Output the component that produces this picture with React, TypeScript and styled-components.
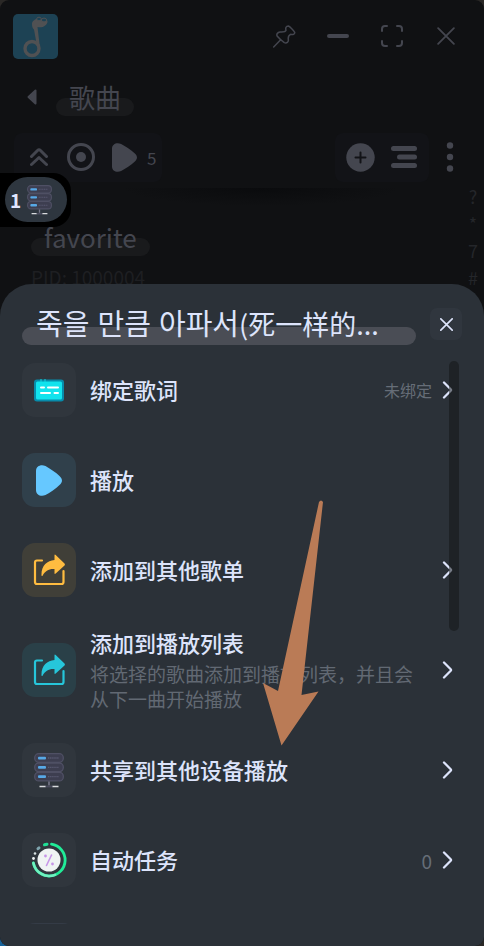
import React from "react";
import styled, { createGlobalStyle } from "styled-components";

const GlobalStyle = createGlobalStyle`
  * { box-sizing: border-box; }
  html, body, #root { height: 100%; }
  body {
    margin: 0;
    overflow: hidden;
    background: linear-gradient(45deg, #17639b 0 16px, #2a2826 40px);
    font-family: "Noto Sans CJK SC", "Noto Sans CJK KR", sans-serif;
  }
  button {
    border: 0;
    padding: 0;
    background: none;
    color: inherit;
    font: inherit;
    cursor: pointer;
  }
  h1, h2, p { margin: 0; font-weight: 400; }
  svg { display: block; flex: none; }
`;

const Window = styled.div`
  position: relative;
  height: 100%;
  overflow: hidden;
  border-radius: 9px;
  background: #101113;
  color: #44464f;
`;

const TitleBar = styled.header`
  display: flex;
  align-items: center;
  justify-content: space-between;
  height: 72px;
  padding: 0 11px 0 13px;
`;

const WindowControls = styled.div`
  display: flex;
`;

const ControlButton = styled.button`
  display: grid;
  place-items: center;
  width: 54px;
  height: 54px;
`;

const PageHeading = styled.div`
  display: flex;
  align-items: center;
  height: 50px;
  padding-left: 26px;
  gap: 18px;
`;

const BackButton = styled.button`
  width: 12px;
  height: 20px;
  display: grid;
  place-items: center;
`;

const Highlight = styled.div<{ $bar: string }>`
  position: relative;
  isolation: isolate;
  min-width: 0;
  padding: 0 13px;
  line-height: 38px;
  &::before {
    content: "";
    position: absolute;
    z-index: -1;
    left: 0;
    right: 0;
    bottom: 0;
    height: 18px;
    border-radius: 9px;
    background: ${(p) => p.$bar};
  }
`;

const PageTitle = styled.h1`
  font-size: 26px;
  line-height: 38px;
`;

const Toolbar = styled.div`
  display: flex;
  align-items: center;
  height: 66px;
  padding: 4px 24px 0 14px;
`;

const ToolGroup = styled.div`
  display: flex;
  align-items: center;
  gap: 12px;
  height: 49px;
  padding: 0 6px 0 10px;
  border-radius: 8px;
  background: #121317;
`;

const RightTools = styled(ToolGroup)`
  margin-left: auto;
  margin-right: 11px;
  padding: 0 10px;
  gap: 14px;
`;

const ToolButton = styled.button`
  display: flex;
  align-items: center;
  justify-content: center;
  min-width: 30px;
  height: 40px;
`;

const PlayAllButton = styled(ToolButton)`
  gap: 10px;
  padding-left: 4px;
  font-size: 17px;
`;

const MoreButton = styled(ToolButton)`
  min-width: 20px;
`;

const Content = styled.main`
  display: flex;
  justify-content: space-between;
  padding: 0 5px 0 14px;
  background: radial-gradient(ellipse 140px 18px at 54% 0, #0a0b0d, transparent);
`;

const PlaylistCard = styled.section`
  padding: 30px 17px;
`;

const PlaylistName = styled.h2`
  font-size: 26px;
  line-height: 38px;
`;

const PlaylistId = styled.p`
  font-size: 19px;
  line-height: 24px;
  margin-top: 9px;
  color: #1e1f22;
`;

const IndexBar = styled.nav`
  display: flex;
  flex-direction: column;
  width: 12px;
  margin-top: -5px;
  font-size: 18px;
  line-height: 27px;
  text-align: center;
  color: #24262a;
`;

const IndexLink = styled.a`
  color: inherit;
  text-decoration: none;
`;

const DeviceBadge = styled.div`
  position: absolute;
  top: 173px;
  left: 0;
  padding: 4px 4px 5px 5px;
  border-radius: 0 18px 18px 0;
  background: #000;
`;

const BadgePill = styled.div`
  display: flex;
  align-items: center;
  gap: 6px;
  height: 45px;
  padding: 0 15px 0 5px;
  border-radius: 23px;
  background: #2e363f;
  color: #e2e7ff;
  font-size: 19px;
  font-weight: 700;
`;

const Overlay = styled.div`
  position: absolute;
  inset: 0;
  display: flex;
  flex-direction: column;
  padding-top: 284px;
  pointer-events: none;
`;

const Sheet = styled.section`
  position: relative;
  flex: 1;
  min-height: 0;
  display: flex;
  flex-direction: column;
  padding: 0 22px 22px;
  border-radius: 32px 32px 0 0;
  background: #2b3138;
  color: #dde4fb;
  pointer-events: auto;
`;

const SheetHeader = styled.div`
  display: flex;
  align-items: center;
  gap: 14px;
  height: 61px;
  padding-top: 20px;
`;

const SheetTitleBar = styled(Highlight)`
  flex: 1;
  height: 40px;
  padding: 0 14px;
`;

const SheetTitle = styled.h2`
  font-size: 27px;
  line-height: 38px;
`;

const Hangul = styled.span`
  font-size: 29px;
  line-height: 1;
`;

const CloseButton = styled.button`
  display: grid;
  place-items: center;
  width: 32px;
  height: 32px;
  margin-bottom: 1px;
  border-radius: 7px;
  background: #30363e;
`;

const List = styled.div`
  flex: 1;
  min-height: 0;
  overflow: hidden;
`;

const Row = styled.button<{ $tall?: boolean }>`
  display: flex;
  align-items: center;
  width: 100%;
  height: ${(p) => (p.$tall ? 110 : 90)}px;
  padding-right: 9px;
  text-align: left;
`;

const Tile = styled.span<{ $tint?: string }>`
  display: grid;
  place-items: center;
  flex: none;
  width: 54px;
  height: 54px;
  margin-right: 14px;
  border-radius: 13px;
  background: ${(p) => p.$tint ?? "#30363d"};
  color: #66c8ff;
`;

const RowText = styled.span`
  display: flex;
  flex-direction: column;
  gap: 5px;
  flex: 1;
  min-width: 0;
  padding-bottom: 2px;
`;

const RowLabel = styled.span`
  font-size: 22px;
  line-height: 28px;
  font-weight: 500;
`;

const RowHint = styled.span`
  font-size: 19px;
  line-height: 25px;
  color: #626973;
`;

const Trailing = styled.span<{ $size?: number }>`
  display: flex;
  align-items: center;
  gap: 10px;
  margin-left: 20px;
  font-size: ${(p) => p.$size ?? 16}px;
  color: #666d77;
`;

const ScrollThumb = styled.div`
  position: absolute;
  top: 77px;
  right: 25px;
  width: 10px;
  height: 270px;
  border-radius: 5px;
  background: rgba(18, 20, 20, 0.5);
`;

const Pointer = styled.svg`
  position: absolute;
  top: 500px;
  left: 263px;
  pointer-events: none;
`;

const Logo = () => (
  <svg width="45" height="45" viewBox="0 0 45 45" aria-hidden="true">
    <rect width="45" height="45" rx="5" fill="#1d4254" />
    <circle cx="19" cy="34.500" r="7" fill="none" stroke="#505153" strokeWidth="3.400" />
    <path d="M19 10c0-4 5-6 8-5 4-1 8 0 7.500 3-1 4-5 6-10 5l2.500 21-3-2-3-16.500c-1.500-1-2-3-2-5.500z" fill="#505153" />
    <ellipse cx="26" cy="5" rx="2.300" ry="1.800" fill="#1d4254" stroke="#505153" />
    <ellipse cx="31" cy="6" rx="2.600" ry="1.900" fill="#1d4254" stroke="#505153" />
  </svg>
);

const PinIcon = () => (
  <svg width="23" height="23" viewBox="-1 -1 69 69" fill="none" stroke="currentColor" strokeWidth="4.500" strokeLinecap="round" strokeLinejoin="round">
    <path d="M1 65L22 43M12 33C8 27 13 21 20 20C29 20 36 21 38 15C36 8 38 2 45 2C49 3 62 16 64 21C65 27 58 29 52 27C45 30 44 36 45 43C46 50 40 55 33 52C26 47 17 39 12 33Z" />
  </svg>
);

const CrossIcon = ({ size, weight }: { size: number; weight: number }) => (
  <svg width={size} height={size} viewBox="0 0 16 16" fill="none" stroke="currentColor" strokeWidth={weight} strokeLinecap="round">
    <path d="M1 1L15 15M15 1L1 15" />
  </svg>
);

const MinimizeIcon = () => (
  <svg width="22" height="4" viewBox="0 0 22 4">
    <rect width="22" height="4" rx="2" fill="currentColor" />
  </svg>
);

const MaximizeIcon = () => (
  <svg width="24" height="24" viewBox="0 0 24 24" fill="none" stroke="currentColor" strokeWidth="2" strokeLinecap="round">
    <path d="M2 7V5a3 3 0 0 1 3-3h2M17 2h2a3 3 0 0 1 3 3v2M22 17v2a3 3 0 0 1-3 3h-2M7 22H5a3 3 0 0 1-3-3v-2" />
  </svg>
);

const BackIcon = () => (
  <svg width="10" height="16" viewBox="0 0 10 16" fill="currentColor" stroke="currentColor" strokeWidth="2" strokeLinejoin="round">
    <path d="M1.500 8L8.500 1.500V14.500Z" />
  </svg>
);

const CollapseIcon = () => (
  <svg width="20" height="20" viewBox="0 0 20 20" fill="none" stroke="currentColor" strokeWidth="3" strokeLinecap="round" strokeLinejoin="round">
    <path d="M2.500 9.500L8.500 3.500Q10 2 11.500 3.500L17.500 9.500M2.500 17.500L10 10.500L17.500 17.500" />
  </svg>
);

const TargetIcon = () => (
  <svg width="28" height="28" viewBox="0 0 28 28">
    <circle cx="14" cy="14" r="12.500" fill="none" stroke="currentColor" strokeWidth="3" />
    <circle cx="14" cy="14" r="5" fill="currentColor" />
  </svg>
);

const PlayIcon = ({ width, height }: { width: number; height: number }) => (
  <svg width={width} height={height} viewBox="0 0 26 31" preserveAspectRatio="none" fill="currentColor">
    <path d="M0 6C0 1 5-1 9.500 1C14 3.500 20 7.500 23.500 11C26.800 14 26.800 17 23.500 20C20 23.500 14 27.500 9.500 30C5 32 0 30 0 25Z" />
  </svg>
);

const AddIcon = () => (
  <svg width="29" height="29" viewBox="0 0 29 29">
    <circle cx="14.500" cy="14.500" r="14.200" fill="currentColor" />
    <path d="M14.500 9.500v10M9.500 14.500h10" stroke="#121317" strokeWidth="2" strokeLinecap="round" />
  </svg>
);

const LinesIcon = () => (
  <svg width="26" height="24" viewBox="0 0 26 24" fill="currentColor">
    <rect y="1" width="26" height="5" rx="2.500" />
    <rect x="6" y="9.500" width="20" height="5" rx="2.500" />
    <rect y="18" width="26" height="5" rx="2.500" />
  </svg>
);

const MoreIcon = () => (
  <svg width="8" height="30" viewBox="0 0 8 30" fill="currentColor">
    <circle cx="4" cy="3.500" r="3.200" />
    <circle cx="4" cy="15" r="3.200" />
    <circle cx="4" cy="26.500" r="3.200" />
  </svg>
);

const ServerIcon = ({ width, height }: { width: number; height: number }) => (
  <svg width={width} height={height} viewBox="0 0 30 35" preserveAspectRatio="none" aria-hidden="true">
    {[0.7, 10, 19.3].map((y) => (
      <g key={y}>
        <rect x="0.700" y={y} width="28.600" height="8.600" rx="4" fill="#3d3e50" stroke="#4f5064" strokeWidth="1.300" />
        <rect x="4" y={y + 3} width="8" height="2.700" rx="1" fill="#57a8e6" />
        <path d={`M14 ${y + 4.3}h11`} stroke="#585970" strokeWidth="1.300" strokeDasharray="1.400 0.700" />
      </g>
    ))}
    <path d="M15 28.500v4" stroke="#77778a" strokeWidth="1.600" />
    <path d="M11 33.500h8" stroke="#4b4c5e" strokeWidth="1.800" />
    <path d="M5.500 33.500h6M18.500 33.500h6" stroke="#d8dadd" strokeWidth="1.500" />
  </svg>
);

const LyricsIcon = () => (
  <svg width="30" height="23" viewBox="0 0 30 23">
    <rect y="0.500" width="30" height="22" rx="3" fill="#078cab" />
    <rect x="2" y="2.500" width="26" height="18" rx="1.500" fill="#11e3ed" />
    <path d="M7 0v3M11 0v3" stroke="#14d5df" />
    <path d="M7 8.500h3M14 8.500h10M7 14h9M20.500 14h3.500" stroke="#fff" strokeWidth="2" strokeLinecap="round" />
  </svg>
);

const ShareIcon = ({ color }: { color: string }) => (
  <svg width="32" height="32" viewBox="0 0 32 32">
    <path d="M9 6.500H4Q2 6.500 2 8.500V28Q2 30 4 30H28.500Q30.500 30 30.500 28V17" fill="none" stroke={color} strokeWidth="2.200" strokeLinecap="round" />
    <path d="M8.500 21.500C8 12 14 6.500 21.500 6V1.500Q21.500 0 22.700 1L31.500 9.500Q32.300 10.500 31.500 11.500L22.700 19.500Q21.500 20.500 21.500 19V15C16 14.500 12 17 9.700 21.500Q9 22.500 8.500 21.500Z" fill={color} />
  </svg>
);

const TaskIcon = () => (
  <svg width="36" height="36" viewBox="0 0 36 36" fill="none" strokeLinecap="round">
    <path d="M20.500 2.200A16 16 0 1 1 2.400 21" stroke="#20ec98" strokeWidth="2.800" />
    <path d="M24 32.800A16 16 0 0 1 2.400 21" stroke="#70f0c0" strokeWidth="2.500" />
    <path d="M13.500 2.800l2.500-.6" stroke="#20df96" strokeWidth="3" />
    <path d="M7 6.700l1-.8" stroke="#7ea4ad" strokeWidth="3" />
    <circle cx="4" cy="11.500" r="1.300" fill="#d8e2e3" />
    <circle cx="2.500" cy="16.500" r="1.400" fill="#eef3f3" />
    <circle cx="18" cy="18" r="11.500" fill="#eff4f4" />
    <path d="M20.500 13l-5 10.500" stroke="#c696e8" strokeWidth="1.600" />
    <circle cx="14.500" cy="14" r="1.400" fill="#c696e8" />
    <circle cx="21.500" cy="22" r="1.400" fill="#c696e8" />
  </svg>
);

const ChevronIcon = () => (
  <svg width="11" height="18" viewBox="0 0 11 18" fill="none" stroke="#dde4fb" strokeWidth="2.300" strokeLinecap="round" strokeLinejoin="round">
    <path d="M2 1.500L8.700 8.200Q9.400 9 8.700 9.800L2 16.500" />
  </svg>
);

type Item = {
  label?: string;
  hint?: string;
  value?: string;
  valueSize?: number;
  tint?: string;
  icon?: React.ReactNode;
  arrow?: boolean;
};

const items: Item[] = [
  { label: "绑定歌词", value: "未绑定", icon: <LyricsIcon />, arrow: true },
  { label: "播放", tint: "#30404b", icon: <PlayIcon width={26} height={31} /> },
  { label: "添加到其他歌单", tint: "#403f38", icon: <ShareIcon color="#ffbc40" />, arrow: true },
  {
    label: "添加到播放列表",
    hint: "将选择的歌曲添加到播放列表，并且会从下一曲开始播放",
    tint: "#2a4048",
    icon: <ShareIcon color="#26c6da" />,
    arrow: true,
  },
  { label: "共享到其他设备播放", icon: <ServerIcon width={30} height={35} />, arrow: true },
  { label: "自动任务", value: "0", valueSize: 19, icon: <TaskIcon />, arrow: true },
  { tint: "#343b46" },
];

export default function App() {
  return (
    <>
      <GlobalStyle />
      <Window>
        <TitleBar>
          <Logo />
          <WindowControls>
            <ControlButton aria-label="置顶"><PinIcon /></ControlButton>
            <ControlButton aria-label="最小化"><MinimizeIcon /></ControlButton>
            <ControlButton aria-label="最大化"><MaximizeIcon /></ControlButton>
            <ControlButton aria-label="关闭"><CrossIcon size={18} weight={1.6} /></ControlButton>
          </WindowControls>
        </TitleBar>
        <PageHeading>
          <BackButton aria-label="返回"><BackIcon /></BackButton>
          <Highlight $bar="#191a1c"><PageTitle>歌曲</PageTitle></Highlight>
        </PageHeading>
        <Toolbar>
          <ToolGroup>
            <ToolButton aria-label="收起"><CollapseIcon /></ToolButton>
            <ToolButton aria-label="定位"><TargetIcon /></ToolButton>
            <PlayAllButton aria-label="播放全部"><PlayIcon width={25} height={29} />5</PlayAllButton>
          </ToolGroup>
          <RightTools>
            <ToolButton aria-label="添加"><AddIcon /></ToolButton>
            <ToolButton aria-label="排序"><LinesIcon /></ToolButton>
          </RightTools>
          <MoreButton aria-label="更多"><MoreIcon /></MoreButton>
        </Toolbar>
        <Content>
          <PlaylistCard>
            <Highlight $bar="#191a1c"><PlaylistName>favorite</PlaylistName></Highlight>
            <PlaylistId>PID: 1000004</PlaylistId>
          </PlaylistCard>
          <IndexBar>
            {["?", "*", "7", "#"].map((mark) => (
              <IndexLink key={mark} href="#">{mark}</IndexLink>
            ))}
          </IndexBar>
        </Content>

        <DeviceBadge>
          <BadgePill>1<ServerIcon width={25} height={30} /></BadgePill>
        </DeviceBadge>

        <Overlay>
          <Sheet role="dialog" aria-label="歌曲菜单">
            <SheetHeader>
              <SheetTitleBar $bar="#4a4d55">
                <SheetTitle><Hangul lang="ko">죽을 만큼 아파서</Hangul>(死一样的...</SheetTitle>
              </SheetTitleBar>
              <CloseButton aria-label="关闭菜单"><CrossIcon size={13} weight={2} /></CloseButton>
            </SheetHeader>
            <List>
              {items.map((item, i) => (
                <Row key={i} $tall={Boolean(item.hint)}>
                  <Tile $tint={item.tint}>{item.icon}</Tile>
                  <RowText>
                    {item.label && <RowLabel>{item.label}</RowLabel>}
                    {item.hint && <RowHint>{item.hint}</RowHint>}
                  </RowText>
                  {item.arrow && (
                    <Trailing $size={item.valueSize}>
                      {item.value}
                      <ChevronIcon />
                    </Trailing>
                  )}
                </Row>
              ))}
            </List>
            <ScrollThumb />
          </Sheet>
        </Overlay>

        <Pointer width="62" height="246" viewBox="0 0 62 246" aria-hidden="true">
          <path d="M56 2Q58 -1 60 2L38.500 195L55.500 191.500L18.500 245.500L0 183L15 191Z" fill="#ba7b56" />
        </Pointer>
      </Window>
    </>
  );
}
